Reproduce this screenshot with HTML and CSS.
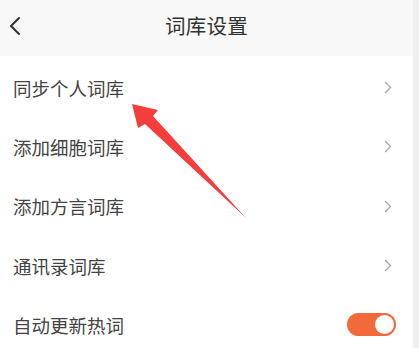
FILE: index.html
```html
<!DOCTYPE html>
<html lang="zh">
<head>
<meta charset="utf-8">
<link rel="stylesheet" href="styles.css">
</head>
<body>
<div class="screen">
  <div class="main">
    <header class="header">
      <svg class="back" width="12" height="20" viewBox="0 0 12 20"><path d="M10 2 L2 10 L10 18" fill="none" stroke="#333" stroke-width="2" stroke-linecap="round" stroke-linejoin="round"/></svg>
      <h1 class="title">词库设置</h1>
    </header>
    <ul class="list">
      <li class="row"><span class="label">同步个人词库</span><svg class="chev" width="8" height="13" viewBox="0 0 8 13"><path d="M1 1 L6.5 6.5 L1 12" fill="none" stroke="#a8a8a8" stroke-width="1.3"/></svg></li>
      <li class="row"><span class="label">添加细胞词库</span><svg class="chev" width="8" height="13" viewBox="0 0 8 13"><path d="M1 1 L6.5 6.5 L1 12" fill="none" stroke="#a8a8a8" stroke-width="1.3"/></svg></li>
      <li class="row"><span class="label">添加方言词库</span><svg class="chev" width="8" height="13" viewBox="0 0 8 13"><path d="M1 1 L6.5 6.5 L1 12" fill="none" stroke="#a8a8a8" stroke-width="1.3"/></svg></li>
      <li class="row"><span class="label">通讯录词库</span><svg class="chev" width="8" height="13" viewBox="0 0 8 13"><path d="M1 1 L6.5 6.5 L1 12" fill="none" stroke="#a8a8a8" stroke-width="1.3"/></svg></li>
      <li class="row"><span class="label">自动更新热词</span><span class="toggle"><span class="knob"></span></span></li>
    </ul>
  </div>
  <div class="strip"></div>
  <svg class="annot" width="419" height="348" viewBox="0 0 419 348"><polygon points="132,104 158,110 153,116 246,218 145,124 138,128" fill="#f43e3e"/></svg>
</div>
</body>
</html>
```
FILE: styles.css
```css
* { box-sizing: border-box; }
html, body { margin: 0; padding: 0; background: #fff; }
body { font-family: "Noto Sans CJK SC", "Noto Sans", sans-serif; }
.screen { position: relative; display: flex; width: 419px; height: 348px; overflow: hidden; }
.main { flex: 1; background: #fff; }
.strip { width: 6px; background: #efefef; }
.header { height: 56px; background: #f8f8f8; position: relative; display: flex; align-items: center; justify-content: center; padding-bottom: 6px; }
.back { position: absolute; left: 9px; top: 16px; }
.title { margin: 0; font-size: 20.5px; font-weight: 400; color: #333; letter-spacing: 0.2px; }
.list { list-style: none; margin: 0; padding: 2px 0 0; }
.row { height: 59.3px; display: flex; align-items: center; justify-content: space-between; padding: 0 17px 0 13px; }
.label { font-size: 18.5px; color: #444; }
.chev { margin-right: 4px; }
.toggle { width: 49px; height: 23px; border-radius: 12px; background: #f26a3a; position: relative; display: block; }
.knob { position: absolute; right: 2px; top: 2px; width: 19px; height: 19px; border-radius: 50%; background: #fff; }
.annot { position: absolute; left: 0; top: 0; pointer-events: none; }
```
